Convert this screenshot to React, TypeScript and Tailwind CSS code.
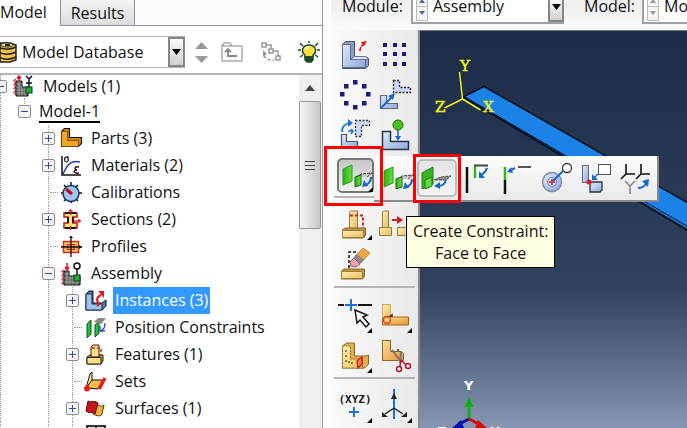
import type { ReactNode } from "react";

function Icon({ size = 36, children }: { size?: number; children: ReactNode }) {
  return (
    <svg
      width={size}
      height={size}
      viewBox={`0 0 ${size} ${size}`}
      fill="none"
      stroke="none"
      aria-hidden="true"
      className="block shrink-0"
    >
      {children}
    </svg>
  );
}

/* ---------- tree icons (24 x 24) ---------- */

const ModelIcon = () => (
  <Icon size={24}>
    <path d="M3 4v16M1 6l3-2M1 10l3-2M1 14l3-2M1 18l3-2" stroke="#e0303a" />
    <path d="M4 6h6v6h6v9H4z" fill="#666" stroke="#111" />
    <path d="M7 6v15M10 12v9M13 12v9M4 9h6M4 12h6M4 15h12M4 18h12" stroke="#bbb" strokeWidth="0.6" />
    <path d="M7 1v5M5 3.500l2-2.500l2 2.500" stroke="#e01020" strokeWidth="1.500" />
    <path d="M14 1l3 3 3-3M17 4v8M14 8h6" stroke="#111" strokeWidth="1.500" />
    <rect x="14" y="12" width="6" height="6" fill="#1cb030" stroke="#0a3a10" />
  </Icon>
);

const AssemblyIcon = () => (
  <Icon size={24}>
    <path d="M3 8v15M1 10l3-2M1 14l3-2M1 18l3-2M1 22l3-2" stroke="#e0303a" />
    <path d="M4 9h5v5h11v9H4z" fill="#666" stroke="#111" />
    <path d="M7 9v14M10 14v9M13 14v9M17 14v9M4 12h5M4 16h16M4 20h16" stroke="#bbb" strokeWidth="0.6" />
    <path d="M7 1v6M5 5l2 3 2-3" stroke="#e01020" strokeWidth="1.500" />
    <circle cx="17" cy="4" r="3" fill="#fff" stroke="#111" strokeWidth="1.500" />
    <path d="M17 7v7" stroke="#111" strokeWidth="1.500" />
    <rect x="14" y="13" width="6" height="6" fill="#1cb030" stroke="#0a3a10" />
  </Icon>
);

const PartIcon = () => (
  <Icon size={24}>
    <path d="M1.500 4.500l3-3h5v9h12v6l-3 3h-17z" fill="#c8860c" stroke="#111" strokeWidth="1.200" />
    <path d="M1.500 4.500h6v9h11v6h-17z" fill="#f0a726" stroke="#6b4400" strokeWidth="0.800" />
  </Icon>
);

const MaterialIcon = () => (
  <Icon size={24}>
    <path d="M2 2v19h19" stroke="#111" strokeWidth="1.500" />
    <path d="M3 20C8 9 12 6 20 8" stroke="#2438b8" strokeWidth="1.500" />
    <path d="M9 3H5.500C3.800 5 4.500 8 6.500 8S9 5 7 3" stroke="#111" strokeWidth="1.200" />
    <path d="M19 13c-5-1-5 2.500-2 3c-4 0-4 4 2 3" stroke="#111" strokeWidth="1.400" />
  </Icon>
);

const CalibrationIcon = () => (
  <Icon size={24}>
    <path
      d="M11 1v4M4 4l3 3M18 4l-3 3M1 12h3M18 12h4M4 20l3-3M18 20l-3-3M11 19v3"
      stroke="#111"
      strokeWidth="1.500"
    />
    <circle cx="11" cy="12.500" r="8" fill="#9fc4ee" stroke="#1b3560" strokeWidth="1.500" />
    <path d="M6 8l6 5" stroke="#c00c14" strokeWidth="3" />
  </Icon>
);

const SectionIcon = () => (
  <Icon size={24}>
    <path d="M4 5h13v4h-4v6h4v5H4v-5h4V9H4z" fill="#ffe27a" stroke="#c0141c" strokeWidth="1.500" />
    <path d="M5 5h11M5 20h11M8 9v6M13 9v6" stroke="#111" strokeWidth="1.800" />
    <path d="M10.500 1v6M8.500 3h4M13 13h8M19 11v4M10.500 18v4" stroke="#e02020" strokeWidth="1.300" />
  </Icon>
);

const ProfileIcon = () => (
  <Icon size={24}>
    <rect x="3.500" y="6.500" width="15" height="11" fill="#ffc15c" stroke="#c63322" strokeWidth="1.500" />
    <rect x="7.500" y="9.500" width="7" height="5" fill="#f49a70" stroke="#d8261c" />
    <path d="M11 1v21M1 12h21" stroke="#111" strokeWidth="1.300" />
    <path d="M9 3l2-2.500 2 2.500zM19 10l3 2-3 2z" fill="#111" />
  </Icon>
);

const InstanceIcon = () => (
  <Icon size={24}>
    <path d="M2 5l3-3h4v12h9l4-3v6l-4 4H2z" fill="#5579b4" stroke="#111" />
    <path d="M2 5h6v10h10v6H2z" fill="#9ec1ee" stroke="#1a2c50" />
    <path d="M13 17c3-1 1-4 0-6 0-3 2-4 4-5" stroke="#e01818" strokeWidth="2" />
    <path d="M14 2h6v7z" fill="#e01818" />
  </Icon>
);

const PositionIcon = () => (
  <Icon size={24}>
    <path d="M3 8l4-4v14l-4 4z" fill="#1fc43c" stroke="#0b4d18" />
    <path d="M11 9l4-3v11l-4 4z" fill="#1fc43c" stroke="#0b4d18" />
    <path d="M10 6l4-4h8l-5 6z" fill="#888" />
    <path d="M21 7c0 5-1 6-5 8M16 10v5h5" stroke="#3346b4" strokeWidth="1.300" />
  </Icon>
);

const FeatureIcon = () => (
  <Icon size={24}>
    <path d="M3 14l3-2h13v6l-2 3H3z" fill="#c99b3a" stroke="#222" />
    <path d="M7 4l2-2h6v12H7z" fill="#ffdf82" stroke="#222" />
    <path d="M3 14.500h14V21H3z" fill="#ffdf82" stroke="#222" />
    <path d="M8 5h9v8" stroke="#d82020" strokeDasharray="3 2" strokeWidth="1.500" />
  </Icon>
);

const SetIcon = () => (
  <Icon size={24}>
    <path d="M2 18L6 4l2-2v10z" fill="#ffe48c" stroke="#111" />
    <path d="M2 18l6-8h11l-5 9z" fill="#f2bb4a" stroke="#111" />
    <path d="M15 19L21 8" stroke="#e02020" strokeWidth="3.500" />
    <circle cx="3" cy="18.500" r="3" fill="#e02020" />
  </Icon>
);

const SurfaceIcon = () => (
  <Icon size={24}>
    <path d="M11 7c4 0 5 4 9 1l-2 9c-2 3-5 2-9 0z" fill="#f2b43a" stroke="#5b3a08" />
    <path d="M4 4c4 2 6-1 10 2l-3 11c-4-3-6 0-9-3z" fill="#c4141c" stroke="#5c0a0c" />
  </Icon>
);

const GridIcon = () => (
  <Icon size={24}>
    <rect x="3" y="2" width="18" height="19" fill="#ddd" stroke="#333" strokeWidth="2" />
    <path d="M12 2v19M3 8h18M3 14h18" stroke="#333" strokeWidth="2" />
  </Icon>
);

/* ---------- toolbox icons (36 x 36) ---------- */

const Gradients = () => (
  <svg width="0" height="0" className="absolute" aria-hidden="true">
    <defs>
      <linearGradient id="steel" x1="0" y1="0" x2="1" y2="1">
        <stop offset="0" stopColor="#dfe9fb" />
        <stop offset="1" stopColor="#8fa9dc" />
      </linearGradient>
      <linearGradient id="gold" x1="0" y1="0" x2="1" y2="1">
        <stop offset="0" stopColor="#fff0b0" />
        <stop offset="1" stopColor="#e8bd60" />
      </linearGradient>
      <linearGradient id="orange" x1="0" y1="0" x2="1" y2="1">
        <stop offset="0" stopColor="#ffdf9a" />
        <stop offset="1" stopColor="#e59330" />
      </linearGradient>
      <linearGradient id="leaf" x1="0" y1="0" x2="1" y2="0">
        <stop offset="0" stopColor="#2fae1c" />
        <stop offset="1" stopColor="#66e23c" />
      </linearGradient>
    </defs>
  </svg>
);

const Corner = () => <path d="M35 29v5h-5z" fill="#000" />;

const CreateInstance = () => (
  <Icon>
    <path d="M5.500 8.500l3-3h9v15h11l3 2v7l-3 3h-23z" fill="#8e9dbd" stroke="#4a566e" />
    <path d="M5.500 8.500h8v15h15v8h-23z" fill="url(#steel)" stroke="#5b6a8a" />
    <path d="M13.500 23.500l4-3h11l3 2-3 1z" fill="#dbe5f8" stroke="#5b6a8a" strokeWidth="0.800" />
    <path d="M23 15c0-3 1-5 4-7" stroke="#e01010" strokeWidth="1.800" strokeDasharray="4 1" />
    <path d="M24 6l6-1-3 5z" fill="#e01010" />
  </Icon>
);

const LinearPattern = () => (
  <Icon>
    {[9, 18, 28].map((y) =>
      [8, 18, 27].map((x) => <rect key={`${x}-${y}`} x={x - 2} y={y - 2} width="4" height="4" fill="#1a1a80" />)
    )}
  </Icon>
);

const ringDots = [
  [18, 6],
  [27, 10],
  [31, 18],
  [27, 27],
  [18, 31],
  [9, 27],
  [5, 18],
  [9, 10],
];

const RadialPattern = () => (
  <Icon>
    {ringDots.map(([x, y]) => (
      <rect key={`${x}-${y}`} x={x - 2} y={y - 2} width="4.500" height="4.500" fill="#1a1a80" />
    ))}
  </Icon>
);

const TranslateInstance = () => (
  <Icon>
    <path d="M16.500 4.500h6v7h11v5h-17z" fill="#c9d8f4" stroke="#222" strokeWidth="1.300" strokeDasharray="2 1.500" />
    <path d="M3.500 19.500h6v8h11v5h-17z" fill="url(#steel)" stroke="#667" strokeWidth="1.200" />
    <path d="M4 32L15 21" stroke="#1468d0" strokeWidth="1.800" />
    <path d="M11 20l7-3-2 7z" fill="#1468d0" />
  </Icon>
);

const RotateInstance = () => (
  <Icon>
    <path d="M18.500 4.500h14v5h-8v11h-6z" fill="#c9d8f4" stroke="#333" strokeWidth="1.300" strokeDasharray="2 1.500" />
    <path d="M4.500 18.500h5v7h11v6h-16z" fill="url(#steel)" stroke="#556" strokeWidth="1.200" />
    <path d="M5 16c0-6 3-8 7-9" stroke="#1874d8" strokeWidth="1.800" />
    <path d="M11 3l5 4-5 4z" fill="#1874d8" />
    <path d="M11 15h5M14 13l2 2-2 3" stroke="#1874d8" strokeWidth="1.500" />
  </Icon>
);

const TranslateTo = () => (
  <Icon>
    <path d="M5.500 15.500h8v10h18v8h-26z" fill="url(#steel)" stroke="#26334e" strokeWidth="1.500" />
    <path d="M21 14v9" stroke="#1468d0" strokeWidth="1.500" />
    <path d="M18 20h6l-3 5z" fill="#1468d0" />
    <circle cx="21" cy="9" r="5" fill="#43c51e" stroke="#1d6b10" />
  </Icon>
);

const ParallelFace = ({ corner = false }: { corner?: boolean }) => (
  <Icon>
    <path d="M5 11l9-4v16l-9 4z" fill="url(#leaf)" stroke="#2b9a1e" />
    <path d="M18 19l5-3 11-1-5 4" fill="#ccc" stroke="#333" strokeDasharray="3 1" />
    <path d="M17 19l6-2v10l-6 2z" fill="url(#leaf)" stroke="#1c6c16" />
    <path d="M33 19c0 4-1 6-5 8" stroke="#1468d0" strokeWidth="2" />
    <path d="M26 22l4 6-6 1z" fill="#1468d0" />
    {corner && <Corner />}
  </Icon>
);

const FaceToFace = () => (
  <Icon>
    <path d="M3 13l11-6v17l-11 5z" fill="#36b51e" stroke="#227a18" />
    <path d="M6 20l7-3v9l-7 3z" fill="#5cda36" stroke="#227a18" />
    <path d="M15 20l7-3 10-1-5 4z" fill="#8f8f8f" stroke="#444" strokeDasharray="3 1" />
    <path d="M27 20c-1 4-3 6-8 6" stroke="#1468d0" strokeWidth="2" />
    <path d="M21 22v7l-6-3z" fill="#1468d0" />
  </Icon>
);

const ParallelEdge = () => (
  <Icon>
    <path d="M8 7v26" stroke="#111" strokeWidth="2.500" />
    <path d="M16 18V6" stroke="#36b51e" strokeWidth="2.500" />
    <path d="M15 5.500h14" stroke="#444" strokeWidth="2" />
    <path d="M28 8c-1 4-3 5-6 7" stroke="#1468d0" strokeWidth="2" />
    <path d="M20 11v7h6z" fill="#1468d0" />
  </Icon>
);

const EdgeToEdge = () => (
  <Icon>
    <path d="M6 7v13" stroke="#36b51e" strokeWidth="2.500" />
    <path d="M6 20v14" stroke="#111" strokeWidth="2.500" />
    <path d="M19 7h13" stroke="#555" strokeWidth="2" />
    <path d="M16 8l-4 2" stroke="#1468d0" strokeWidth="2" />
    <path d="M12 7l2 6-6-1z" fill="#1468d0" />
  </Icon>
);

const Coaxial = () => (
  <Icon>
    <circle cx="13" cy="22" r="9.500" fill="url(#steel)" stroke="#7a8aaa" strokeWidth="1.500" />
    <circle cx="13" cy="22" r="4.500" fill="#c7d3ee" stroke="#7a8aaa" />
    <path d="M14 21L24 11" stroke="#1468d0" strokeWidth="2" />
    <path d="M10 22h6M13 19v6" stroke="#e02020" strokeWidth="1.500" />
    <circle cx="28" cy="8" r="4.500" fill="#fff" stroke="#333" strokeWidth="1.300" />
  </Icon>
);

const CoincidentPoint = () => (
  <Icon>
    <rect x="3.500" y="5.500" width="6" height="17" fill="url(#steel)" stroke="#667" />
    <path d="M11 22h12v8l-2 2H11z" fill="url(#steel)" stroke="#333" strokeWidth="1.300" />
    <rect x="19.500" y="4.500" width="12" height="10" fill="#fff" stroke="#555" />
    <path d="M19 14l-5 5" stroke="#1468d0" strokeWidth="1.500" />
    <path d="M13 14v6h6z" fill="#1468d0" />
    <circle cx="10" cy="22" r="2.500" fill="#e01818" />
  </Icon>
);

const ParallelCsys = () => (
  <Icon>
    <path d="M7 4v10l-5 5M7 14h9" stroke="#111" strokeWidth="1.600" />
    <path d="M22 4v10l-5 5M22 14h9" stroke="#111" strokeWidth="1.600" />
    <path d="M6 21l5 5 5-5M11 26v8" stroke="#888" strokeWidth="1.600" />
    <path d="M19 28c4 0 6-1 8-4" stroke="#1468d0" strokeWidth="1.800" />
    <path d="M23 21l7-2-1 8z" fill="#1468d0" />
  </Icon>
);

const FeatureEdit = () => (
  <Icon>
    <path d="M12.500 6l2-1h6v18h-8z" fill="url(#gold)" stroke="#9a7a3a" />
    <path d="M5.500 24l2-2h21v7l-2 3h-21z" fill="#c2913e" stroke="#8a6828" />
    <path d="M5.500 24.500h21v7h-21z" fill="url(#gold)" stroke="#9a7a3a" />
    <path d="M13 9.500h13V22" stroke="#d81818" strokeWidth="2" strokeDasharray="3 2" />
    <Corner />
  </Icon>
);

const FeatureMove = () => (
  <Icon>
    <path d="M5.500 6l1-1h5v17h-6z" fill="url(#gold)" stroke="#9a7a3a" />
    <path d="M2.500 21.500h12v8h-12z" fill="url(#gold)" stroke="#9a7a3a" />
    <path d="M20.500 21.500h12v8h-12z" fill="url(#gold)" stroke="#9a7a3a" />
    <path d="M15 14h6" stroke="#d02018" strokeWidth="2" />
    <path d="M20 10l6 4-6 4z" fill="#d02018" />
  </Icon>
);

const FeatureErase = () => (
  <Icon>
    <path d="M12 22V6h8" stroke="#111" strokeWidth="1.500" strokeDasharray="3 2" />
    <path d="M4.500 25l2-2h21v7l-2 3h-21z" fill="#c2913e" stroke="#8a6828" />
    <path d="M4.500 25.500h21v7h-21z" fill="url(#gold)" stroke="#9a7a3a" />
    <path d="M26 2l7 5-9 10-7-6z" fill="#f3a445" stroke="#b9803a" strokeWidth="0.800" />
    <path d="M20 8l7 6-4 4-6-6z" fill="#888" />
    <path d="M17 12l6 6-4 3-5-1-1-4z" fill="#f2a2b0" stroke="#8c5764" />
  </Icon>
);

const DatumPick = () => (
  <Icon>
    <path d="M1 6h6M21 6h14" stroke="#111" strokeWidth="2" />
    <path d="M14 0v12M8 6h12" stroke="#1874d8" strokeWidth="2" />
    <path d="M18 11l2 13 3-3 6 7 3-3-6-7 4-2z" fill="#fff" stroke="#111" strokeWidth="1.500" />
    <Corner />
  </Icon>
);

const PartitionEdge = () => (
  <Icon>
    <path d="M5.500 5.500h8v14h-8z" fill="url(#gold)" stroke="#d6ac54" />
    <path d="M5.500 19l2-1h24v8h-26z" fill="url(#orange)" stroke="#9c6a28" />
    <path d="M12 18l3-2v2" stroke="#333" strokeWidth="1.500" />
    <circle cx="10" cy="21" r="3.500" stroke="#e84010" strokeWidth="1.500" />
    <Corner />
  </Icon>
);

const PartitionCell = () => (
  <Icon>
    <path d="M5.500 7l4-3h8v13h11l3-1v9l-4 4h-22z" fill="#e2b04a" stroke="#8a6828" />
    <path d="M5.500 7h8v13h12v9h-20z" fill="url(#gold)" stroke="#8a6828" strokeDasharray="2 1" />
    <path d="M9 11v2M9 16v2M9 21v2M14 24h2M12 22v2" stroke="#664" strokeWidth="1.500" />
    <path d="M20 22l5-4v7l-4 4z" fill="#f48450" stroke="#d01810" strokeWidth="1.300" />
    <Corner />
  </Icon>
);

const CutCell = () => (
  <Icon>
    <path d="M5.500 1.500h8v11h11l2 2v7h-21z" fill="url(#orange)" stroke="#8a6828" />
    <path d="M15 11l9 12M24 13l-1 11" stroke="#777" strokeWidth="2" />
    <path d="M21 12v-2" stroke="#333" strokeWidth="1.500" />
    <path d="M24 21l5 5M24 21l-1 6" stroke="#b01830" strokeWidth="1.500" />
    <circle cx="22" cy="30" r="2.500" stroke="#b01830" strokeWidth="1.500" />
    <circle cx="31" cy="27" r="2.500" stroke="#b01830" strokeWidth="1.500" />
  </Icon>
);

const DatumPoint = () => (
  <Icon>
    <text
      x="18"
      y="14"
      textAnchor="middle"
      className="fill-neutral-900 font-['DejaVu_Sans_Mono',monospace] text-[11px] font-bold"
    >
      (XYZ)
    </text>
    <path d="M17 18v10M12 23h10" stroke="#1874d8" strokeWidth="2" />
    <Corner />
  </Icon>
);

const DatumCsys = () => (
  <Icon>
    <path d="M17 0v30" stroke="#1874d8" strokeWidth="2" />
    <path d="M14 10l3-6 3 6z" fill="#222" />
    <path d="M17 19l-9 6M17 19l9 6" stroke="#222" strokeWidth="1.500" />
    <path d="M5 23v5h6zM30 23v5h-6z" fill="#222" />
    <Corner />
  </Icon>
);

/* ---------- model tree ---------- */

type Node = {
  label: string;
  depth: number;
  icon?: ReactNode;
  toggle?: "+" | "-";
  selected?: boolean;
};

const nodes: Node[] = [
  { label: "Models (1)", depth: 0, icon: <ModelIcon />, toggle: "-" },
  { label: "Model-1", depth: 1, toggle: "-" },
  { label: "Parts (3)", depth: 2, icon: <PartIcon />, toggle: "+" },
  { label: "Materials (2)", depth: 2, icon: <MaterialIcon />, toggle: "+" },
  { label: "Calibrations", depth: 2, icon: <CalibrationIcon /> },
  { label: "Sections (2)", depth: 2, icon: <SectionIcon />, toggle: "+" },
  { label: "Profiles", depth: 2, icon: <ProfileIcon /> },
  { label: "Assembly", depth: 2, icon: <AssemblyIcon />, toggle: "-" },
  { label: "Instances (3)", depth: 3, icon: <InstanceIcon />, toggle: "+", selected: true },
  { label: "Position Constraints", depth: 3, icon: <PositionIcon /> },
  { label: "Features (1)", depth: 3, icon: <FeatureIcon />, toggle: "+" },
  { label: "Sets", depth: 3, icon: <SetIcon /> },
  { label: "Surfaces (1)", depth: 3, icon: <SurfaceIcon />, toggle: "+" },
  { label: "", depth: 3, icon: <GridIcon /> },
];

function Toggle({ sign, label }: { sign: "+" | "-"; label: string }) {
  return (
    <button
      aria-label={label}
      className="relative flex size-[13px] items-center justify-center rounded-[2px] border border-[#8e8e8e] bg-[#f4f4f4]"
    >
      <svg width="7" height="7" viewBox="0 0 7 7" stroke="#33509c" aria-hidden="true">
        <path d={sign === "+" ? "M0 3.500h7M3.500 0v7" : "M0 3.500h7"} />
      </svg>
    </button>
  );
}

function TreeRow({ node }: { node: Node }) {
  const { label, depth, icon, toggle, selected } = node;
  return (
    <li className={`flex items-center ${depth === 0 ? "h-[23px]" : "h-[27px]"}`}>
      {[0, 1, 2].slice(0, depth).map((level) => (
        <span key={level} className="flex h-full w-6 shrink-0 justify-center">
          {level !== 1 && <span className="border-l border-dotted border-[#999]" />}
        </span>
      ))}
      <span className="grid h-full w-6 shrink-0 place-items-center *:col-start-1 *:row-start-1">
        <span
          className={`border-l border-dotted border-[#999] ${depth === 1 ? "h-1/2 self-start" : "h-full"}`}
        />
        {toggle ? (
          <Toggle sign={toggle} label={label} />
        ) : (
          <span className="ml-3 w-2 border-t border-dotted border-[#999]" />
        )}
      </span>
      {icon}
      <span
        className={`whitespace-nowrap ${depth === 1 ? "ml-[3px] border-b-2 border-black leading-5" : "ml-[5px] px-[2px] leading-[27px]"} ${
          selected ? "bg-[#3399ff] text-white" : ""
        }`}
      >
        {label}
      </span>
    </li>
  );
}

function ModelPanel() {
  return (
    <aside className="flex w-[323px] shrink-0 flex-col overflow-hidden border-r border-[#9a9aa4] bg-white">
      <div role="tablist" className="flex h-[26px] shrink-0">
        <button role="tab" aria-selected="true" className="w-[60px] bg-white pb-[3px] text-left leading-5">
          Model
        </button>
        <button
          role="tab"
          aria-selected="false"
          className="w-[75px] border-x border-b border-[#8f9099] bg-linear-to-b from-[#f3f3f3] to-[#dcdcdc] leading-5"
        >
          Results
        </button>
        <div className="flex-1 border-b border-[#8f9099] bg-[#fafafa]" />
      </div>

      <div className="flex h-[47px] shrink-0 items-center pt-1">
        <div className="flex h-8 w-[185px] items-center border-y border-[#b5b5bb]">
          <svg width="17" height="24" viewBox="0 0 17 24" aria-hidden="true">
            <path d="M0 3h10l6 2v15l-6 2H0z" fill="#f2c44c" stroke="#222" strokeWidth="1.500" />
            <path d="M0 8c6 2 12 1 16-1M0 13c6 2 12 1 16-1M0 18c6 2 12 1 16-1" stroke="#222" strokeWidth="1.500" fill="none" />
            <ellipse cx="7" cy="5" rx="6" ry="2" fill="#fff0a8" stroke="#222" />
            <path d="M5 5h5" stroke="#222" strokeWidth="2" />
          </svg>
          <span className="ml-[5px] flex-1 whitespace-nowrap">Model Database</span>
          <button
            aria-label="Choose database"
            className="flex h-full w-[17px] items-center justify-center border-2 border-[#858585] bg-linear-to-b from-[#fafafa] to-[#cfcfcf]"
          >
            <svg width="9" height="6" aria-hidden="true" className="shrink-0">
              <path d="M0 0h9L4.500 6z" />
            </svg>
          </button>
        </div>
        <button aria-label="Move up or down" className="ml-[9px]">
          <svg width="15" height="24" fill="#999" aria-hidden="true">
            <path d="M1 9l6.500-7L14 9zM1 16h13l-6.500 7z" />
          </svg>
        </button>
        <button aria-label="Parent folder" className="ml-3">
          <svg width="23" height="20" fill="none" stroke="#aaa" strokeWidth="1.500" aria-hidden="true">
            <path d="M1 4l2-3h6l2 3h10v15H1zM1 4h11" />
            <path d="M7 8v6h9M4 10l3-3 3 3" stroke="#888" strokeWidth="1.800" />
          </svg>
        </button>
        <button aria-label="Filter" className="ml-4">
          <svg width="22" height="22" fill="none" stroke="#999" strokeWidth="1.500" aria-hidden="true">
            <path d="M2 2h4v4H2zM9 8h4v4H9zM16 15h4v4h-4zM6 4h5v4M13 10h5v5" />
            <path d="M4 15c2 3 5 4 10 4" strokeDasharray="3 2" />
            <path d="M3 9l4 4-4 3z" fill="#999" stroke="none" />
          </svg>
        </button>
        <button aria-label="Tips" className="ml-4">
          <svg width="22" height="22" fill="none" stroke="#1b4a2c" strokeWidth="1.500" aria-hidden="true">
            <path d="M0 9h3M19 9h3M2 2l3 3M20 2l-3 3M11 0v2M2 16l3-2M20 16l-3-2" />
            <path d="M7 14C2 10 5 4 11 4s9 6 4 10v2H7z" fill="#ffe03c" />
            <path d="M8 8c1-2 2-2 3-2" stroke="#fff" strokeWidth="2" />
            <path d="M7 16h8v3l-2 2H9l-2-2z" fill="#1b4a2c" />
          </svg>
        </button>
      </div>

      <div className="flex min-h-0 flex-1 border-t-2 border-[#b4b4bc]">
        <ul className="-ml-3 min-w-0 flex-1 overflow-hidden">
          {nodes.map((node) => (
            <TreeRow key={node.label} node={node} />
          ))}
        </ul>
        <div className="w-[23px] bg-[#efefef] pr-px">
          <button aria-label="Scroll up" className="flex h-[26px] w-full items-center justify-center">
            <svg width="10" height="6" fill="#444" aria-hidden="true">
              <path d="M0 6l5-6 5 6z" />
            </svg>
          </button>
          <div className="flex h-32 flex-col items-center justify-center gap-[3px] rounded-[2px] border border-[#979797] bg-linear-to-r from-[#f6f6f6] to-[#c6c6ca]">
            <span className="h-px w-2.5 bg-[#444]" />
            <span className="h-px w-2.5 bg-[#444]" />
            <span className="h-px w-2.5 bg-[#444]" />
          </div>
        </div>
      </div>
    </aside>
  );
}

/* ---------- context bar ---------- */

function Spinner({ muted = false }: { muted?: boolean }) {
  const tone = muted ? "#999" : "#4a66b0";
  return (
    <button aria-label="Step" className="h-[21px] w-3 shrink-0 border border-t-0 border-[#bbb] bg-[#f4f4f4]">
      <svg width="10" height="20" viewBox="0 0 10 20" fill={tone} aria-hidden="true">
        <path d="M2 3l3-4 3 4zM2 11h6l-3 4z" />
        <path d="M0 6h10v1H0z" fill="#bbb" />
      </svg>
    </button>
  );
}

function ContextBar() {
  return (
    <header className="flex h-[30px] shrink-0 items-start bg-linear-to-b from-[#ededed] to-[#fafafa] pl-[11px] leading-[13px]">
      <span className="w-[69px] shrink-0">Module:</span>
      <div className="flex h-6 w-[153px] shrink-0 border-b-2 border-l-2 border-[#a0a0a0] bg-white pl-[3px]">
        <Spinner />
        <span className="ml-[5px] flex-1">Assembly</span>
        <button
          aria-label="Choose module"
          className="flex w-4 items-start justify-center border-2 border-t-0 border-[#858585] bg-linear-to-b from-[#fafafa] to-[#cfcfcf] pt-1"
        >
          <svg width="9" height="6" aria-hidden="true" className="shrink-0">
            <path d="M0 0h9L4.500 6z" />
          </svg>
        </button>
      </div>
      <span className="ml-5 w-[58px] shrink-0">Model:</span>
      <div className="flex h-6 min-w-0 flex-1 border-b-2 border-l-2 border-[#a0a0a0] bg-white pl-[3px]">
        <Spinner muted />
        <span className="ml-[5px] whitespace-nowrap">Mo</span>
      </div>
    </header>
  );
}

/* ---------- toolbox and flyout ---------- */

function Tool({ name, children }: { name: string; children: ReactNode }) {
  return (
    <button aria-label={name} className="flex h-10 w-10 items-center justify-center">
      {children}
    </button>
  );
}

function Divider() {
  return <div className="mx-[-1px] h-[2px] bg-[#b4b4b4]" />;
}

function Toolbox() {
  return (
    <nav
      aria-label="Assembly tools"
      className="w-[89px] shrink-0 overflow-hidden border-r-2 border-[#8a8a8a] bg-linear-to-r from-[#fafafa] to-[#e9e9e9] px-1"
    >
      <div className="grid grid-cols-[40px_40px] pt-1">
        <Tool name="Create Instance"><CreateInstance /></Tool>
        <Tool name="Linear Pattern"><LinearPattern /></Tool>
        <Tool name="Radial Pattern"><RadialPattern /></Tool>
        <Tool name="Translate Instance"><TranslateInstance /></Tool>
        <Tool name="Rotate Instance"><RotateInstance /></Tool>
        <Tool name="Translate To"><TranslateTo /></Tool>
      </div>
      <div className="p-[2px] pt-1 pb-[3px]">
        <button
          aria-label="Create Constraint"
          className="flex h-[35px] w-[37px] items-center justify-center rounded-[5px] border-2 border-[#777] bg-linear-to-b from-[#c6c6c6] to-[#f2f2f2]"
        >
          <ParallelFace corner />
        </button>
      </div>
      <Divider />
      <div className="grid grid-cols-[40px_40px] pt-[6px] pb-[2px]">
        <Tool name="Edit Feature"><FeatureEdit /></Tool>
        <Tool name="Move Feature"><FeatureMove /></Tool>
        <Tool name="Delete Feature"><FeatureErase /></Tool>
      </div>
      <Divider />
      <div className="grid grid-cols-[40px_40px] pt-[9px]">
        <Tool name="Create Datum"><DatumPick /></Tool>
        <Tool name="Partition Edge"><PartitionEdge /></Tool>
        <Tool name="Partition Cell"><PartitionCell /></Tool>
        <Tool name="Cut Cell"><CutCell /></Tool>
      </div>
      <Divider />
      <div className="grid grid-cols-[40px_40px] pt-2">
        <Tool name="Datum Point"><DatumPoint /></Tool>
        <Tool name="Datum CSYS"><DatumCsys /></Tool>
      </div>
    </nav>
  );
}

function ConstraintFlyout() {
  return (
    <div
      role="toolbar"
      aria-label="Constraints"
      className="absolute top-[126px] left-[43px] flex h-[46px] w-[285px] items-center border-r-2 border-b-2 border-[#8a8a8a] bg-linear-to-b from-[#fdfdfd] to-[#e9e9e9] pl-[3px]"
    >
      <Tool name="Parallel Face"><ParallelFace /></Tool>
      <button
        aria-label="Face to Face"
        className="flex h-[38px] w-10 items-center justify-center rounded-[5px] border-2 border-[#bdbdbd] bg-linear-to-b from-[#e4e4e4] to-[#f4f4f4]"
      >
        <FaceToFace />
      </button>
      <Tool name="Parallel Edge"><ParallelEdge /></Tool>
      <Tool name="Edge to Edge"><EdgeToEdge /></Tool>
      <Tool name="Coaxial"><Coaxial /></Tool>
      <Tool name="Coincident Point"><CoincidentPoint /></Tool>
      <Tool name="Parallel CSYS"><ParallelCsys /></Tool>
    </div>
  );
}

function Viewport() {
  return (
    <main className="relative min-w-0 flex-1 overflow-hidden border-t border-[#777] bg-linear-to-b from-[#1c2c46] via-[#30425e] via-65% to-[#8797b2]">
      <svg
        viewBox="420 31 267 397"
        preserveAspectRatio="xMinYMin slice"
        className="absolute inset-0 h-full w-full"
        aria-label="Assembly viewport"
      >
        <path d="M463 97l21-10.500L690 204v28z" fill="#1c82e8" stroke="#06101c" strokeWidth="1.500" />
        <path d="M463 96L690 228M463 96L690 231" stroke="#06101c" strokeWidth="1" />
        <g stroke="#f0ee1c" strokeWidth="1.500" fill="none">
          <path d="M462.500 99l-3-27M462.500 99l-18 9M462.500 99l18 11" />
        </g>
        <g className="fill-[#f0ee1c] font-['DejaVu_Serif',serif] text-[15px]" stroke="#f0ee1c" strokeWidth="0.500">
          <text x="460" y="71">Y</text>
          <text x="435" y="112">Z</text>
          <text x="483" y="112">X</text>
        </g>
        <g className="fill-white font-['DejaVu_Sans',sans-serif] text-[13px] font-bold">
          <text x="464" y="390">Y</text>
          <text x="437" y="436">Z</text>
          <text x="490" y="436">X</text>
        </g>
        <path d="M469 419v-13" stroke="#0fae14" strokeWidth="3" />
        <path d="M464.500 407l4.500-10 4.500 10z" fill="#0fae14" />
        <path d="M469 419l-10 5" stroke="#0a10b4" strokeWidth="3" />
        <path d="M461 420l3 8h-12z" fill="#0a10b4" />
        <path d="M469 419l10 5" stroke="#d80c0c" strokeWidth="3" />
        <path d="M478 420l9 8h-12z" fill="#d80c0c" />
      </svg>
    </main>
  );
}

export default function App() {
  return (
    <div className="flex h-screen overflow-hidden bg-[#fcfcfc] font-['Open_Sans','Noto_Sans',sans-serif] text-base text-[#111]">
      <Gradients />
      <ModelPanel />
      <div className="ml-2 flex min-w-0 flex-1 flex-col">
        <ContextBar />
        <div className="relative flex min-h-0 flex-1">
          <Toolbox />
          <Viewport />
          <ConstraintFlyout />
          <div className="absolute top-[116px] -left-[7px] h-[60px] w-[59px] border-3 border-[#f00]" />
          <div className="absolute top-[124px] left-[82px] h-[49px] w-[48px] border-3 border-[#f00]" />
          <div
            role="tooltip"
            className="absolute top-[186px] left-[75px] border border-black bg-[#ffffe1] px-1.5 py-[3px] text-center leading-[22px] whitespace-nowrap"
          >
            Create Constraint:
            <br />
            Face to Face
          </div>
        </div>
      </div>
    </div>
  );
}
